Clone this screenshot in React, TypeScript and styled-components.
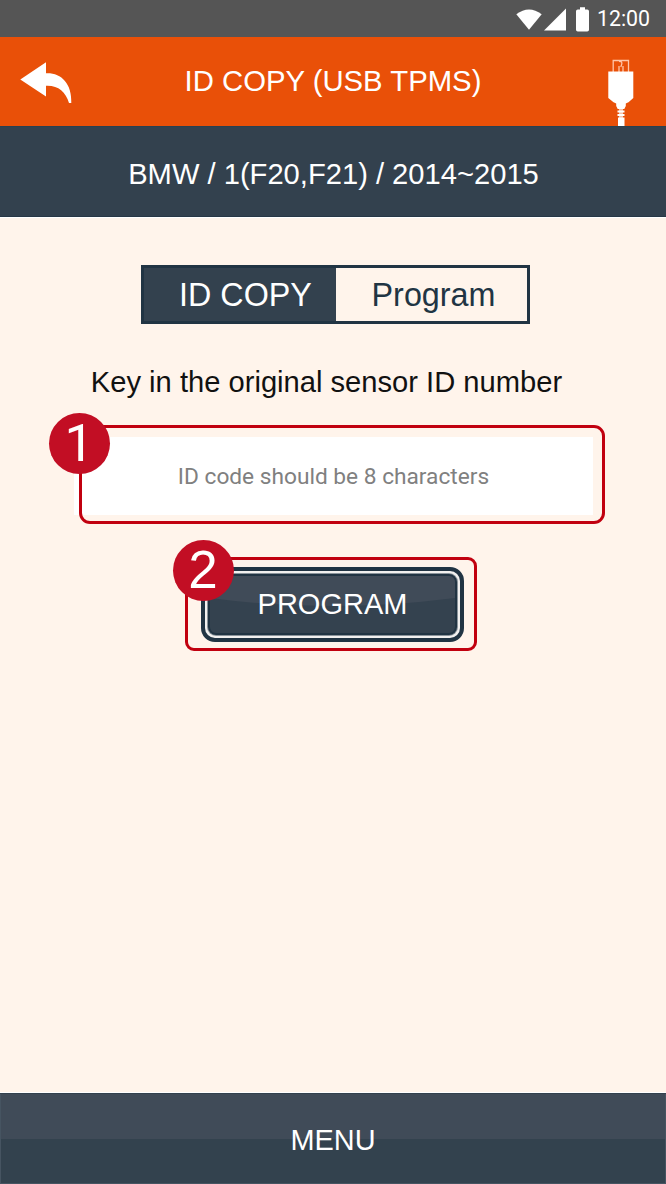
import React from "react";
import styled, { createGlobalStyle } from "styled-components";

const GlobalStyle = createGlobalStyle`
  * { box-sizing: border-box; }
  body { margin: 0; background: #fff4eb; }
  button { border: 0; padding: 0; margin: 0; font: inherit; color: inherit; background: none; }
`;

const Screen = styled.div`
  display: flex;
  flex-direction: column;
  width: 666px;
  height: 1184px;
  overflow: hidden;
  background: #fff4eb;
  font-family: "Liberation Sans", Arial, sans-serif;
  font-size: 29.15px;
  color: #fff;
`;

const StatusBar = styled.div`
  display: flex;
  justify-content: flex-end;
  height: 37px;
  flex: none;
  background: #555;
`;

const StatusIcons = styled.svg`
  display: block;
  width: 82px;
  height: 37px;
`;

const Clock = styled.span`
  width: 69px;
  font-family: Roboto, sans-serif;
  font-size: 21.3px;
  line-height: 37px;
`;

const TitleBar = styled.header`
  display: grid;
  grid-template-columns: 90px 1fr 90px;
  height: 89px;
  flex: none;
  background: #e95008;
`;

const Title = styled.h1`
  margin: 0;
  font-size: 29.3px;
  font-weight: 400;
  line-height: 87px;
  text-align: center;
  white-space: nowrap;
`;

const BarIcon = styled.svg`
  display: block;
  width: 90px;
  height: 89px;
`;

const VehicleBar = styled.div`
  height: 92px;
  flex: none;
  padding-left: 1px;
  background: #33414e;
  border-bottom: 1px solid #fff;
  box-shadow: inset 0 1px #29404f, inset 0 -1px #273746;
  line-height: 97px;
  text-align: center;
`;

const Content = styled.main`
  display: flex;
  flex: 1;
  flex-direction: column;
  align-items: center;
  padding-top: 47px;
`;

const Tabs = styled.div`
  display: flex;
  width: 389px;
  height: 59px;
  margin-left: 5px;
  border: 3px solid #213443;
`;

const Tab = styled.button<{ $active?: boolean }>`
  width: ${(p) => (p.$active ? "192px" : "191px")};
  padding-left: ${(p) => (p.$active ? "11px" : "4px")};
  background: ${(p) => (p.$active ? "#33414e" : "#fff4eb")};
  color: ${(p) => (p.$active ? "#fff" : "#213443")};
  font-size: 32.3px;
  line-height: 54px;
  white-space: nowrap;
`;

const Prompt = styled.p`
  margin: 38px 0 0;
  padding-right: 13px;
  height: 40px;
  line-height: 40px;
  color: #111;
  white-space: nowrap;
`;

const Field = styled.div`
  position: relative;
  width: 519px;
  height: 78px;
  margin-top: 35px;
  background: #fff;
  color: #808080;
  font-family: Roboto, sans-serif;
  font-size: 22.7px;
  line-height: 79px;
  text-align: center;
  padding-left: 1px;
`;

const Callout = styled.div<{ $inset: string; $line: string; $radius: string }>`
  position: absolute;
  inset: ${(p) => p.$inset};
  border: ${(p) => p.$line} solid #c1000f;
  border-radius: ${(p) => p.$radius};
`;

const Badge = styled.span<{ $left: string; $top: string; $font: string; $size: string; $line: string }>`
  position: absolute;
  left: ${(p) => p.$left};
  top: ${(p) => p.$top};
  width: 61px;
  height: 61px;
  border-radius: 50%;
  background: #c20e24;
  color: #fff;
  font-family: ${(p) => p.$font}, sans-serif;
  font-size: ${(p) => p.$size};
  line-height: ${(p) => p.$line};
  text-align: center;
`;

const Action = styled.div`
  position: relative;
  width: 263px;
  height: 75px;
  margin: 52px 2px 0 0;
`;

const ProgramButton = styled.button`
  width: 263px;
  height: 75px;
  padding: 3px;
  border: 4px solid #213443;
  border-radius: 14px;
  background: #f1f0ef;
  color: #fff;
`;

const ButtonFace = styled.span`
  position: relative;
  display: block;
  height: 61px;
  border: 2px solid #213443;
  border-radius: 8px;
  overflow: hidden;
  background: #34424f;
  box-shadow: 0 0 0 1px #8b949b;
`;

const Gloss = styled.svg`
  position: absolute;
  inset: 0;
  width: 100%;
  height: 100%;
`;

const ButtonLabel = styled.span`
  position: relative;
  display: block;
  padding-left: 1px;
  font-size: 29px;
  line-height: 56px;
`;

const MenuBar = styled.button`
  width: 666px;
  height: 91px;
  flex: none;
  background: linear-gradient(#404b58 0 46px, #33424e 46px);
  box-shadow: 0 -1px #fff, inset 0 1px #33414e, inset 1px 0 #465461, inset -1px -1px #465461;
  font-size: 28.9px;
  line-height: 94px;
  text-align: center;
`;

export default function App() {
  return (
    <Screen>
      <GlobalStyle />
      <StatusBar>
        <StatusIcons viewBox="515 0 82 37" fill="#fff">
          <path d="M516.3 14.2Q529 4.6 541.7 14.2L529 29.8Z" />
          <path d="M566 8.4V30.4H544Z" />
          <path d="M580 7.3h5v2.2h2.2q1.8 0 1.8 1.8v18.4q0 1.8-1.8 1.8h-9.4q-1.8 0-1.8-1.8V11.3q0-1.8 1.8-1.8h2.2Z" />
        </StatusIcons>
        <Clock>12:00</Clock>
      </StatusBar>
      <TitleBar>
        <BarIcon viewBox="0 37 90 89" fill="#fff">
          <path d="M20.3 79.5L46 62.2V73.2C61 72.5 72 83 71.3 103H69C65.5 91.5 58 85.2 46 85.8V96.5Z" />
        </BarIcon>
        <Title>ID COPY (USB TPMS)</Title>
        <BarIcon viewBox="576 37 90 89" fill="#fff">
          <path
            d="M613.2 72V60.5H628.5V72M619 66V72M623 66V72M619 61.5Q623 61 621.5 65L620.8 67"
            fill="none"
            stroke="#ffc5a8"
            strokeWidth="1.3"
          />
          <path d="M608.3 71.5H633.3V98L628.5 102.3L625.8 103.5V106L624.3 109H617.7L616.2 106V103.500L613.500 102.300L608.3 98Z" />
          <path d="M617.5 110.5h7v2h-7zM617.5 114h7v2h-7zM618 117.500h6.500v8.500h-6.500z" />
          <path d="M619 108h4v10h-4z" opacity=".65" />
        </BarIcon>
      </TitleBar>
      <VehicleBar>BMW / 1(F20,F21) / 2014~2015</VehicleBar>
      <Content>
        <Tabs>
          <Tab $active>ID COPY</Tab>
          <Tab>Program</Tab>
        </Tabs>
        <Prompt>Key in the original sensor ID number</Prompt>
        <Field>
          ID code should be 8 characters
          <Callout $inset="-12px -12px -9px 5px" $line="3px" $radius="11px" />
          <Badge $left="-25px" $top="-24px" $font="Roboto" $size="52px" $line="62px">1</Badge>
        </Field>
        <Action>
          <ProgramButton>
            <ButtonFace>
              <Gloss viewBox="0 0 245 57" preserveAspectRatio="none">
                <path d="M0 0H245V22Q120 38 0 22Z" fill="#404b58" />
              </Gloss>
              <ButtonLabel>PROGRAM</ButtonLabel>
            </ButtonFace>
          </ProgramButton>
          <Callout $inset="-10px -13px -9px -16px" $line="3px" $radius="9px" />
          <Badge $left="-28px" $top="-27px" $font="'Liberation Sans', Arial" $size="53px" $line="60px">2</Badge>
        </Action>
      </Content>
      <MenuBar>MENU</MenuBar>
    </Screen>
  );
}
